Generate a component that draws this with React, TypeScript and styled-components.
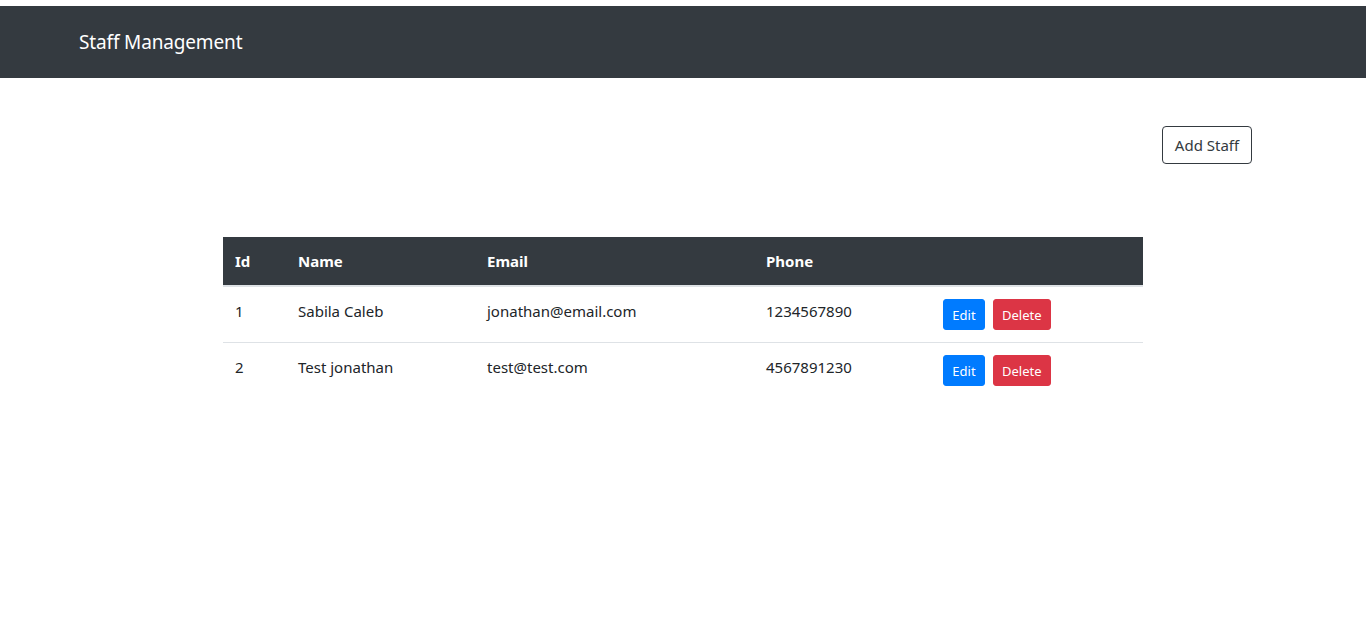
import React from "react";
import styled, { createGlobalStyle } from "styled-components";

const Global = createGlobalStyle`
  html, body { margin: 0; padding: 0; background: #fff; }
  body {
    font-family: "Noto Sans", "Open Sans", sans-serif;
    font-size: 16px;
    line-height: 1.5;
    color: #212529;
  }
  * { box-sizing: border-box; }
`;

const Page = styled.div`
  padding-top: 6px;
  min-height: 631px;
  background: #fff;
`;

const Navbar = styled.nav`
  height: 72px;
  background: #343a40;
  display: flex;
  align-items: center;
  padding: 0 79px;
`;

const Brand = styled.span`
  color: #fff;
  font-size: 19px;
  line-height: 30px;
  letter-spacing: -0.15px;
`;

const Main = styled.main`
  display: flex;
  flex-direction: column;
`;

const Toolbar = styled.div`
  display: flex;
  justify-content: flex-end;
  padding: 48px 114px 0 0;
`;

const OutlineButton = styled.button`
  height: 38px;
  width: 90px;
  padding: 0 8px;
  font-family: inherit;
  font-size: 15px;
  color: #343a40;
  background: #fff;
  border: 1px solid #343a40;
  border-radius: 4px;
  cursor: pointer;
`;

const Table = styled.table`
  margin: 73px 0 0 223px;
  width: 920px;
  border-collapse: collapse;
  table-layout: fixed;
`;

const Th = styled.th<{ $w: number }>`
  width: ${(p) => p.$w}px;
  background: #343a40;
  color: #fff;
  font-weight: 700;
  font-size: 15px;
  text-align: left;
  padding: 12px;
  line-height: 24px;
  border-bottom: 2px solid #dee2e6;
`;

const Td = styled.td`
  padding: 12px;
  vertical-align: top;
  font-size: 15px;
  line-height: 24px;
  border-top: 1px solid #dee2e6;
`;

const Row = styled.tr`
  &:first-child td { border-top: none; }
`;

const Actions = styled.div`
  display: flex;
  gap: 8px;
`;

const SmallButton = styled.button<{ $variant: "primary" | "danger" }>`
  height: 31px;
  padding: 0 8px;
  min-width: 42px;
  font-family: inherit;
  font-size: 13px;
  color: #fff;
  border: 1px solid ${(p) => (p.$variant === "primary" ? "#007bff" : "#dc3545")};
  background: ${(p) => (p.$variant === "primary" ? "#007bff" : "#dc3545")};
  border-radius: 3px;
  cursor: pointer;
`;

const staff = [
  { id: 1, name: "Sabila Caleb", email: "jonathan@email.com", phone: "1234567890" },
  { id: 2, name: "Test jonathan", email: "test@test.com", phone: "4567891230" },
];

export default function App() {
  return (
    <>
      <Global />
      <Page>
        <Navbar>
          <Brand>Staff Management</Brand>
        </Navbar>
        <Main>
          <Toolbar>
            <OutlineButton>Add Staff</OutlineButton>
          </Toolbar>
          <Table>
            <thead>
              <tr>
                <Th $w={63}>Id</Th>
                <Th $w={189}>Name</Th>
                <Th $w={279}>Email</Th>
                <Th $w={177}>Phone</Th>
                <Th $w={212}></Th>
              </tr>
            </thead>
            <tbody>
              {staff.map((s) => (
                <Row key={s.id}>
                  <Td>{s.id}</Td>
                  <Td>{s.name}</Td>
                  <Td>{s.email}</Td>
                  <Td>{s.phone}</Td>
                  <Td>
                    <Actions>
                      <SmallButton $variant="primary">Edit</SmallButton>
                      <SmallButton $variant="danger">Delete</SmallButton>
                    </Actions>
                  </Td>
                </Row>
              ))}
            </tbody>
          </Table>
        </Main>
      </Page>
    </>
  );
}
